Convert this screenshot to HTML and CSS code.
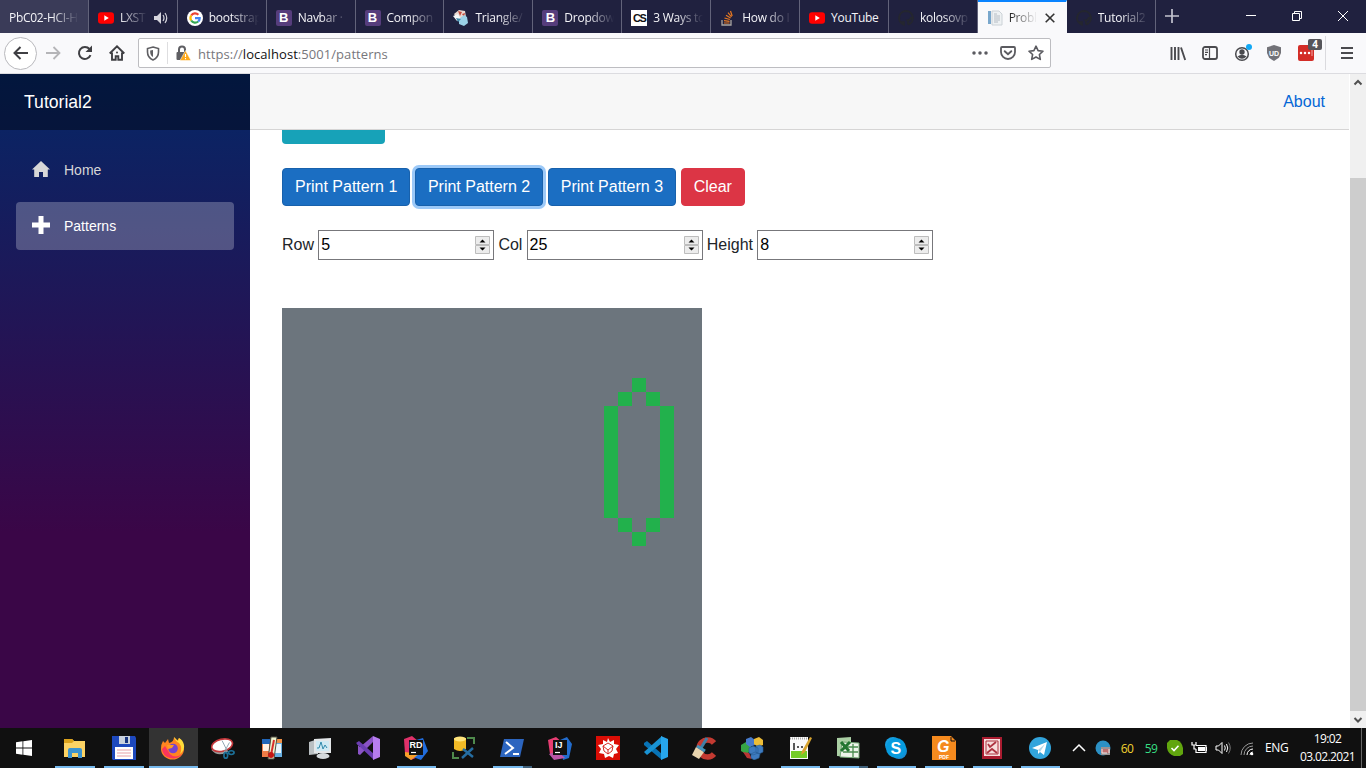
FILE: index.html
```html
<!DOCTYPE html>
<html lang="en">
<head>
<meta charset="utf-8">
<title>Tutorial2</title>
<link rel="stylesheet" href="styles.css">
</head>
<body>
<svg class="defs" width="0" height="0">
  <symbol id="yt" viewBox="0 0 16 16"><rect x="0" y="2.2" width="16" height="11.6" rx="3" fill="#f00"/><path d="M6.3 5.3v5.4L10.8 8z" fill="#fff"/></symbol>
  <symbol id="gh" viewBox="0 0 16 16"><path d="M8 1a7 7 0 0 0-2.2 13.600v-2.400c-2 .4-2.600-.8-2.600-.8M10.200 14.600v-2.600c0-.8-.2-1.200-.5-1.500 2-.2 3.300-1 3.300-3.500M8 1a7 7 0 0 1 2.200 13.600" fill="none" stroke="#24262f" stroke-width="2"/></symbol>
</svg>
<div class="tabs">
  <div class="tab selected-first"><span class="label">PbC02-HCI-H</span></div>
  <div class="tab"><svg class="fav"><use href="#yt"/></svg><span class="label short">LXST</span><svg class="sound" viewBox="0 0 14 14"><path d="M0 5h3l4-4v12L3 9H0z" fill="#d5d5dd"/><path d="M9 4q2 3 0 6M11 2q3.500 5 0 10" fill="none" stroke="#d5d5dd" stroke-width="1.200"/></svg></div>
  <div class="tab"><svg class="fav" viewBox="0 0 16 16"><circle cx="8" cy="8" r="8" fill="#fff"/><g fill="none" stroke-width="2.200"><path d="M4.200 5.500A4.700 4.700 0 0 1 11.400 4.700" stroke="#ea4335"/><path d="M4.200 5.500a4.700 4.700 0 0 0 0 5" stroke="#fbbc05"/><path d="M4.200 10.500a4.700 4.700 0 0 0 7 1" stroke="#34a853"/><path d="M8 8.200h4.700q0 2-1.500 3.300" stroke="#4285f4"/></g></svg><span class="label">bootstrap</span></div>
  <div class="tab"><span class="fav boot">B</span><span class="label">Navbar ·</span></div>
  <div class="tab"><span class="fav boot">B</span><span class="label">Compon</span></div>
  <div class="tab"><svg class="fav" viewBox="0 0 16 16"><path d="M1 4l5-4 6 1 1 6-6 3-4-3z" fill="#e8d9d2"/><path d="M5 1l4 1-2 4zM9 4l3-1-1 4z" fill="#c44b3d"/><path d="M0 6l5-2 3 5-4 2z" fill="#f6f7f9"/><path d="M6 9l5-4 3 2 1 6-4 3-5-2z" fill="#9bd2e8"/><path d="M3 8l5 1-3 3z" fill="#3f88a8"/></svg><span class="label">Triangle/</span></div>
  <div class="tab"><span class="fav boot">B</span><span class="label">Dropdow</span></div>
  <div class="tab"><span class="fav cs">CS</span><span class="label">3 Ways to</span></div>
  <div class="tab"><svg class="fav" viewBox="0 0 16 16"><path d="M2 10v5h9v-5" fill="none" stroke="#aaa6a2" stroke-width="1.300"/><path d="M4 13h5.500M4 10.700l5.500.6M4.500 8l5.300 1.500M6 5.200l4.600 2.900M8 2.700l3.500 4.100M10.500 1l1.700 5" stroke="#e87922" stroke-width="1.200"/></svg><span class="label">How do I</span></div>
  <div class="tab"><svg class="fav"><use href="#yt"/></svg><span class="label">YouTube</span></div>
  <div class="tab"><svg class="fav"><use href="#gh"/></svg><span class="label">kolosovp</span></div>
  <div class="tab active"><svg class="fav" viewBox="0 0 16 16"><path d="M1 1h3v13H1z" fill="#79a7cc"/><path d="M5 1h7l3 3v11H5z" fill="#eef1f3" stroke="#ccd2d7"/><path d="M7 6h6M7 8h6M7 10h6M7 12h4M7 4h3" stroke="#aeb7c0" stroke-width=".9"/></svg><span class="label tiny">Probl</span><svg class="close" viewBox="0 0 10 10"><path d="M.7.7l8.600 8.600M9.300.7L.7 9.300" stroke="#333" stroke-width="1.600"/></svg></div>
  <div class="tab"><svg class="fav"><use href="#gh"/></svg><span class="label">Tutorial2</span></div>
  <svg class="newtab" viewBox="0 0 14 14"><path d="M7 0v14M0 7h14" stroke="#c4c4d0" stroke-width="1.700"/></svg>
  <div class="winctl">
    <svg viewBox="0 0 10 10"><path d="M0 4.500h10" stroke="#fff"/></svg>
    <svg viewBox="0 0 10 10"><path d="M.5 2.500h7v7h-7zM2.500 2.500v-2h7v7h-2" fill="none" stroke="#fff"/></svg>
    <svg viewBox="0 0 10 10"><path d="M0 0l10 10M10 0L0 10" stroke="#fff"/></svg>
  </div>
</div>
<div class="toolbar">
  <div class="nav">
    <span class="back"><svg width="16" height="16" viewBox="0 0 16 16"><path d="M15 8H1.500M7.500 2L1.500 8l6 6" fill="none" stroke="#3f3f43" stroke-width="2"/></svg></span>
    <span><svg width="16" height="16" viewBox="0 0 16 16"><path d="M1 8h13.500M8.500 2l6 6-6 6" fill="none" stroke="#b5b5b8" stroke-width="1.800"/></svg></span>
    <span><svg width="16" height="16" viewBox="0 0 16 16"><path d="M13.500 10.200A6 6 0 1 1 12.500 4" fill="none" stroke="#3f3f43" stroke-width="2"/><path d="M15 .5V7H8.500z" fill="#3f3f43"/></svg></span>
    <span><svg width="16" height="16" viewBox="0 0 16 16"><path d="M.7 8.500L8 1.300l7.300 7.200M3 7.500v7.300h3.700v-3.600h2.600v3.600H13V7.500" fill="none" stroke="#3f3f43" stroke-width="1.900"/><circle cx="8" cy="7.500" r="1" fill="#3f3f43"/></svg></span>
  </div>
  <div class="url">
    <svg class="shield" width="14" height="15" viewBox="0 0 14 15"><path d="M7 1l5.500 1.500V6c0 4-2 6.500-5.500 8C3.500 12.500 1.500 10 1.500 6V2.500z" fill="none" stroke="#5f5f63" stroke-width="1.600"/><path d="M7 4v7C5.200 10 4.200 8.500 4.200 6V4.600z" fill="#5f5f63"/></svg>
    <i></i>
    <svg width="16" height="16" viewBox="0 0 16 16"><path d="M4 8V4.500a3 3 0 0 1 6 0V8" fill="none" stroke="#5f5f63" stroke-width="2"/><rect x="1.500" y="7" width="9" height="8" rx="1" fill="#5f5f63"/><path d="M10.500 5.500L16 15.500H5z" fill="#ffa91a" stroke="#fff" stroke-width=".5"/><path d="M10.500 9v3M10.500 13v1.200" stroke="#fff" stroke-width="1.100"/></svg>
    <span class="address">https://<b>localhost</b>:5001/patterns</span>
    <div class="urlicons">
      <svg width="16" height="16" viewBox="0 0 16 16"><path d="M2 8h.01M8 8h.01M14 8h.01" stroke="#5b5b60" stroke-width="3.500" stroke-linecap="round"/></svg>
      <svg width="16" height="16" viewBox="0 0 16 16"><path d="M2 2h12q1 0 1 1v4a7 7 0 0 1-14 0V3q0-1 1-1z" fill="none" stroke="#5b5b60" stroke-width="1.800"/><path d="M4.700 6.200L8 9.300l3.300-3.100" fill="none" stroke="#5b5b60" stroke-width="1.900" stroke-linecap="round"/></svg>
      <svg width="16" height="16" viewBox="0 0 16 16"><path d="M8 1.200l2.100 4.400 4.900.6-3.600 3.300.9 4.900L8 12l-4.300 2.400.9-4.900L1 6.200l4.900-.6z" fill="none" stroke="#5b5b60" stroke-width="1.600" stroke-linejoin="round"/></svg>
    </div>
  </div>
  <div class="ext">
    <span><svg width="16" height="16" viewBox="0 0 16 16"><path d="M1.500 2v13M5 2v13M8.500 2v13M11 2.500L15.200 15" stroke="#4a4a4e" stroke-width="1.900"/></svg></span>
    <span><svg width="16" height="16" viewBox="0 0 16 16"><rect x="1" y="2" width="14" height="12" rx="2" fill="none" stroke="#4a4a4e" stroke-width="1.800"/><path d="M7.500 2v12M3 5h3M3 7.300h3M3 9.600h2" stroke="#4a4a4e" stroke-width="1.200"/></svg></span>
    <span class="account"><svg width="18" height="20" viewBox="0 0 18 20"><circle cx="8" cy="11" r="6.300" fill="none" stroke="#4a4a4e" stroke-width="1.500"/><circle cx="8" cy="9" r="2.700" fill="#4a4a4e"/><path d="M3.500 13.500q4.500-3.500 9 0-4.500 4.500-9 0" fill="#4a4a4e"/><circle cx="15" cy="4" r="3" fill="#12a8f4"/></svg></span>
    <span class="ub">UD</span>
    <span class="lp"><svg width="16" height="16" viewBox="0 0 16 16"><rect width="16" height="16" rx="2" fill="#d32d27"/><path d="M3 8h.01M7 8h.01M11 8h.01" stroke="#fff" stroke-width="2.500" stroke-linecap="round"/><path d="M14 5v6" stroke="#f4aaa8"/></svg><em>4</em></span>
    <i></i>
    <span><svg width="12" height="12" viewBox="0 0 12 12"><path d="M0 1h12M0 6h12M0 11h12" stroke="#4a4a4e" stroke-width="1.800"/></svg></span>
  </div>
</div>
<div class="page">
  <aside class="sidebar">
    <div class="brand">Tutorial2</div>
    <a class="link"><svg width="18" height="18" viewBox="0 0 18 18"><path d="M9 1L0 9.500h2.200V17H7v-5h4v5h4.800V9.500H18z" fill="currentColor"/></svg>Home</a>
    <a class="link on"><svg width="18" height="18" viewBox="0 0 18 18"><path d="M6.500 0h5v6.500H18v5h-6.500V18h-5v-6.500H0v-5h6.500z" fill="currentColor"/></svg>Patterns</a>
  </aside>
  <main>
    <div class="top-row"><a>About</a></div>
    <div class="content">
      <div class="info"></div>
      <div class="row buttons"><button>Print Pattern 1</button><button class="focus">Print Pattern 2</button><button>Print Pattern 3</button><button class="danger">Clear</button></div>
      <div class="row fields">
        <span>Row</span><div class="num">5<svg class="spin"><use href="#spin"/></svg></div>
        <span>Col</span><div class="num">25<svg class="spin"><use href="#spin"/></svg></div>
        <span>Height</span><div class="num">8<svg class="spin"><use href="#spin"/></svg></div>
      </div>
      <svg class="board" viewBox="0 0 420 420" shape-rendering="crispEdges"><rect width="420" height="420" fill="#6c757d"/><path transform="scale(14)" d="M25 5h1v1h-1zM24 6h1v1h-1zM26 6h1v1h-1zM23 7h1v8h-1zM27 7h1v8h-1zM24 15h1v1h-1zM26 15h1v1h-1zM25 16h1v1h-1z" fill="#22b14c"/></svg>
    </div>
  </main>
  <div class="scroll">
    <svg viewBox="0 0 16 17"><path d="M4.500 10.500L8 7l3.500 3.500" fill="none" stroke="#505050" stroke-width="2"/></svg>
    <div class="thumb"></div>
    <svg viewBox="0 0 16 17"><path d="M4.500 7L8 10.500 11.500 7" fill="none" stroke="#505050" stroke-width="2"/></svg>
  </div>
</div>
<svg class="defs" width="0" height="0"><symbol id="spin" viewBox="0 0 15 18"><path d="M.5.5h14v8H.5zM.5 9.500h14v8H.5z" fill="#ececec" stroke="#bdbdbd"/><path d="M4.500 6.500l3-3 3 3zM4.500 11.500l3 3 3-3z" fill="#000"/></symbol></svg>
<div class="taskbar">
  <span class="start"><svg width="16" height="16" viewBox="0 0 16 16"><path d="M0 2.300L6.500 1.300v6.200H0zM7.300 1.200L16 0v7.500H7.300zM0 8.400h6.500v6.300L0 13.700zM7.300 8.400H16V16l-8.700-1.200z" fill="#fff"/></svg></span>
  <div class="pinned">
    <span class="run"><svg viewBox="0 0 24 24"><path d="M1 3h8l2 2h11v16H1z" fill="#fcd364"/><path d="M1 3h8l2 2-2 2H1z" fill="#dba21c"/><path d="M5 14q0-2 2-2h10q2 0 2 2v8h-4v-5H9v5H5z" fill="#3d94cf"/></svg></span>
    <span class="run"><svg viewBox="0 0 24 24"><path d="M0 0h23l1 2v22H1l-1-1z" fill="#1d48bd"/><path d="M7 0h11v8H7z" fill="#c8d0dc"/><path d="M13 1h3v6h-3z" fill="#17347e"/><path d="M3 11h18v12H3z" fill="#fff"/><path d="M5 14h14M5 17h14M5 20h14" stroke="#e9a2a8" stroke-width="1.200"/></svg></span>
    <span class="run lit"><svg viewBox="0 0 24 24"><path d="M2 5l2 2 3-4 1 4q5-1 5-6l3 4 2-3q5 5 5 11a11.500 10.500 0 0 1-23 0q0-5 2-8z" fill="#ff8420"/><path d="M1 13a11 10 0 0 0 20 5q-7 5-12 0L4 10z" fill="#f9355c"/><path d="M13 1q1 4 5 6 4 5 1 11 5-4 4-9-1-5-5-7l-1 3z" fill="#ffdc3a"/><circle cx="12" cy="12.500" r="4.800" fill="#7542cf"/><path d="M6 9h7l-2 3-4 1z" fill="#ff9b22"/></svg></span>
  </div>
  <div class="apps">
    <span><svg viewBox="0 0 26 24"><path d="M2 13q6 7 15 1" fill="none" stroke="#999" stroke-width="4"/><ellipse cx="12" cy="9" rx="11.500" ry="6.500" transform="rotate(-14 12 9)" fill="#fff" stroke="#c4373b" stroke-width="1.800"/><path d="M12 4l6 12M20 6l-6 11" stroke="#8ba2af"/><g fill="none" stroke="#1c7098" stroke-width="1.800"><ellipse cx="16" cy="20" rx="2" ry="3"/><ellipse cx="22" cy="17" rx="3" ry="2"/></g></svg></span>
    <span><svg viewBox="0 0 24 24"><path d="M2 3h8v18H2z" fill="#ef7c46"/><path d="M2 3h8v5H2z" fill="#2166b9"/><path d="M3 8h6v7H3z" fill="#fff1e4"/><path d="M14 3h8v18h-8z" fill="#68afe1"/><path d="M14 3h8v4h-8z" fill="#ef9146"/><path d="M15 8h6v9h-6z" fill="#eaf5fa"/><path d="M11 1h6l-3 22H8z" fill="#eef4cf" stroke="#514e42"/><path d="M14 4l-3 15" stroke="#d82d2b" stroke-width="2"/><circle cx="11" cy="19" r="3" fill="#c41613"/></svg></span>
    <span><svg viewBox="0 0 24 24"><path d="M1 6l9-3v15L1 19z" fill="#b9bfc2"/><path d="M6 3l17-1v15H6z" fill="#e3e6e8"/><path d="M8 5h13v10H8z" fill="#cfe9f3"/><path d="M9 12h2l2-6 2 7 2-4 2 3" fill="none" stroke="#318aac"/><ellipse cx="15" cy="20" rx="6.500" ry="3" fill="#d4d9dc"/></svg></span>
    <span><svg viewBox="0 0 24 24"><path d="M2 6v12l2 1 13-13V0L4 11 1 8z" fill="#8a53c5"/><path d="M0 7l3-2 15 13v6z" fill="#6b3eb2"/><path d="M17 0l7 3v18l-7 3z" fill="#b77df0"/></svg></span>
    <span class="run"><svg viewBox="0 0 24 24"><path d="M0 3l8-3 6 5v16l-7 3-6-6z" fill="#df316a"/><path d="M12 4l7-2 5 13-7 9-8-3z" fill="#216ddd"/><path d="M1 16l14 2-8 6-6-4z" fill="#f8a029"/><path d="M5 4h14v15H5z" fill="#111"/><text x="5.500" y="12" font-size="9">RD</text><path d="M7 16.500h5" stroke="#fff" stroke-width="1.200"/></svg></span>
    <span><svg viewBox="0 0 24 24"><path d="M2 2v11q6 4 12 0V2z" fill="#f2ba26"/><ellipse cx="8" cy="3" rx="6" ry="2.500" fill="#ffe47b"/><path d="M15 2h7v6M1 16v6h6" fill="none" stroke="#4f8a4c" stroke-width="2"/><path d="M11 13l10 8M21 12l-11 10" stroke="#256da1" stroke-width="2.500"/></svg></span>
    <span class="run multi"><svg viewBox="0 0 24 24"><path d="M4 3h20l-4 18H0z" fill="#2c65bf"/><path d="M6 6l7 6-8 6M13 18h6" fill="none" stroke="#fff" stroke-width="2"/></svg></span>
    <span><svg viewBox="0 0 24 24"><path d="M0 4l8-3 6 5-3 16-9-4z" fill="#e73d72"/><path d="M12 4l7-3 5 7-3 14-6 2z" fill="#226ccd"/><path d="M1 18l9-3 7 7-11 2z" fill="#bb55a8"/><path d="M5 4h14v15H5z" fill="#111"/><text x="7" y="12" font-size="9">IJ</text><path d="M7 16.500h5" stroke="#fff" stroke-width="1.200"/></svg></span>
    <span><svg viewBox="0 0 24 24"><path d="M0 0h24v24H0z" fill="#da0d05"/><path d="M12 2l2 4 4-2v4l5 1-3 4 2 4-4 1-1 4-4-2-4 2-1-4-5-1 2-4-3-4 5-1V4l4 2z" fill="#fff"/><path d="M7 10l5-3 5 3-1 5-4 3-4-3zM7 10l5 4 5-4M12 14v4" fill="none" stroke="#d52b25"/></svg></span>
    <span><svg viewBox="0 0 24 24"><path d="M0 7l3-2 15 13v6L0 9z" fill="#0873b5"/><path d="M0 16L18 0v7L3 19z" fill="#1993d4"/><path d="M17 0l7 3v18l-7 3z" fill="#27a6ec"/></svg></span>
    <span><svg viewBox="0 0 24 24"><path d="M22 7A8.500 8.500 0 1 0 22 18" fill="none" stroke="#c33a31" stroke-width="5.500"/><path d="M15 2L9 12" stroke="#3f7fa6" stroke-width="3"/><path d="M4 11l8 5-5 7-7-4z" fill="#e8d4ae"/><path d="M5 10l8 5" stroke="#4394bb" stroke-width="3"/></svg></span>
    <span><svg viewBox="0 0 24 24"><path d="M1 9l5-3 5 3v6l-5 3-5-3z" fill="#36a545"/><path d="M6 3l5-2 4 3v5l-5 2-4-3z" fill="#477bcc"/><path d="M14 3l5-2 4 3v5l-5 2-4-3z" fill="#edbd37"/><path d="M3 16l6 1 3 6-5-1z" fill="#ba3534"/><path d="M9 12l4-2 5 2v5l-5 2-4-2zM16 10l4-1 3 2v5l-4 2-3-2zM11 18l4-2 5 2-1 4-5 2-3-2z" fill="#3e7bc0" stroke="#255b94" stroke-width=".6"/></svg></span>
    <span class="run"><svg viewBox="0 0 24 24"><path d="M2 1h18v22H2z" fill="#fafafa"/><path d="M3 15h16v7H3z" fill="#75cc27"/><path d="M2 2.500h18" stroke="#aaa" stroke-width="2" stroke-dasharray="1 1"/><path d="M6 7v7M9 11h2M13 11h2" stroke="#222" stroke-width="1.500"/><path d="M22 1l-8 14-1 4 4-3L24 2z" fill="#d8a42f"/></svg></span>
    <span class="run multi"><svg viewBox="0 0 24 24"><path d="M1 2l14-1v20L1 20z" fill="#aacfa4"/><path d="M6 6l17 1v15L4 21z" fill="#eef4ea" stroke="#73a573"/><path d="M7 11h15M7 16h15M17 8v13" stroke="#4a8b4e" stroke-width="1.300"/><path d="M5 6l8 9M14 6l-9 9" stroke="#237631" stroke-width="3"/></svg></span>
    <span class="run"><svg viewBox="0 0 24 24"><circle cx="9" cy="9" r="8" fill="#179fe2"/><circle cx="15" cy="15" r="8" fill="#168fd5"/><circle cx="12" cy="12" r="10" fill="#079bdf"/><text x="6.500" y="17.500" font-size="16">S</text></svg></span>
    <span class="run"><svg viewBox="0 0 24 24"><path d="M0 0h19l5 5v19H0z" fill="#f58a1e"/><path d="M19 1v4h4" fill="none" stroke="#111"/><text x="5" y="16" font-size="16" font-style="italic">G</text><text x="7" y="22.500" font-size="5">PDF</text></svg></span>
    <span class="run"><svg viewBox="0 0 24 24"><path d="M2 1h20v22H2z" fill="#aa1c30"/><path d="M4 3h16v17H4z" fill="#f7dddd"/><path d="M6 5h12v13H6z" fill="none" stroke="#ad3240"/><path d="M8 8l2 3 6-5M7 17l5-4 5 4" fill="none" stroke="#ad3240" stroke-width="1.800"/></svg></span>
    <span class="run"><svg viewBox="0 0 24 24"><circle cx="12" cy="12" r="11" fill="#32a4dc"/><path d="M4 12l15-6-3 13-4-3-2 2v-4z" fill="#fff"/><path d="M10 14l7-6-5 8" fill="#b5d7e9"/></svg></span>
  </div>
  <div class="tray">
    <svg class="t" viewBox="0 0 16 16"><path d="M2 11l6-6 6 6" fill="none" stroke="#fff" stroke-width="1.500"/></svg>
    <svg class="t" viewBox="0 0 16 16"><circle cx="8" cy="8" r="7.500" fill="#2c91c5"/><path d="M6 7h9v8H6z" fill="#9a9394"/><path d="M6 9h8v4H6z" fill="#bf7070"/><path d="M7 9v4h5M14 9v4" fill="none" stroke="#e9e9e9"/></svg>
    <span class="temp yellow">60</span><span class="temp green">59</span>
    <svg class="t" viewBox="0 0 16 16"><path d="M3 0h7q5 2 6 8v6l-3 2H7Q1 14 0 8V3z" fill="#61a60e"/><path d="M4.500 8l2.500 2.500 4.500-4.700" fill="none" stroke="#fff" stroke-width="1.600"/></svg>
    <svg class="t" viewBox="0 0 16 16"><path d="M5 5.500h10v7H5V9M15.500 7v4M1 2v3h4V2M3 5v4h2" fill="none" stroke="#fff" stroke-width="1.200"/><path d="M7 7h7v4H7z" fill="#fff"/></svg>
    <svg class="t" viewBox="0 0 16 16"><path d="M1 6h2.500L7 2.500v11L3.500 10H1zM9.500 5.500q1.500 2.500 0 5M11.500 4q2.500 4 0 8" fill="none" stroke="#fff"/><path d="M13.500 2.500q3.500 5.500 0 11" fill="none" stroke="#777"/></svg>
    <svg class="t wifi" viewBox="0 0 16 16"><path d="M2 15A12 12 0 0 1 14 3M5 15a9 9 0 0 1 9-9" fill="none" stroke="#999"/><path d="M8 15a6 6 0 0 1 6-6M11 15q0-3 3-3" fill="none" stroke="#fff"/><circle cx="13" cy="14" r="1.300" fill="#fff"/></svg>
  </div>
  <span class="lang">ENG</span>
  <div class="clock"><span>19:02</span><span>03.02.2021</span></div>
</div>
</body>
</html>
```
FILE: styles.css
```css
* { box-sizing: border-box; }
body { margin: 0; width: 1366px; height: 768px; overflow: hidden; display: flex; flex-direction: column; background: #fff; font-family: "Open Sans", "Noto Sans", sans-serif; }
svg { display: block; flex: none; }
.defs { position: absolute; }
.tabs { height: 33px; background: #20213f; display: flex; color: #f4f4f8; flex: none; }
.tab { width: 88.9px; padding: 2px 6px 0 9px; border-right: 1px solid #62637a; display: flex; align-items: center; font-size: 12px; letter-spacing: -.25px; white-space: nowrap; flex: none; }
.selected-first { background: #3a3b58; padding-right: 8px; }
.selected-first .label { letter-spacing: -.3px; }
.fav { width: 16px; height: 16px; margin-right: 6px; flex: none; }
.label { flex: 1; min-width: 0; line-height: 18px; -webkit-mask-image: linear-gradient(90deg, #000 calc(100% - 28px), transparent 98%); mask-image: linear-gradient(90deg, #000 calc(100% - 28px), transparent 98%); }
.label.short { flex: none; width: 28px; margin-right: 6px; }
.label.tiny { flex: none; width: 29px; margin-right: 6px; letter-spacing: -.4px; }
.tab:nth-child(10) .label { -webkit-mask-image: none; mask-image: none; }
.sound { width: 14px; height: 14px; }
.boot { background: #563d7c; border-radius: 2px; color: #fff; font: bold 13px/16px "Liberation Sans", sans-serif; text-align: center; letter-spacing: 0; }
.cs { background: #fff; color: #111; font: bold 11px/16px "Liberation Sans", sans-serif; text-align: center; letter-spacing: -1.5px; }
.tab.active { background: #f9f9fb; color: #222; border-top: 2px solid #0a84ff; padding-top: 0; border-right-color: #f9f9fb; }
.close { width: 10px; height: 10px; margin-left: 1px; }
.newtab { width: 14px; height: 14px; margin: 9px 0 0 9px; }
.winctl { margin: 11px 18px 0 auto; display: flex; gap: 36px; }
.winctl svg { width: 10px; height: 10px; }
.toolbar { height: 41px; background: #f9f9fb; border-bottom: 1px solid #dcdce0; display: flex; align-items: center; padding-left: 4px; flex: none; }
.nav, .ext { display: flex; align-items: center; }
.nav span, .ext span { width: 32px; height: 34px; display: flex; align-items: center; justify-content: center; flex: none; }
.nav .back { width: 33px; height: 33px; border: 1px solid #b9b9bd; border-radius: 50%; background: #fff; }
.url { width: 913px; height: 30px; margin-left: 5px; border: 1px solid #bdbdc1; border-radius: 2px; background: #fff; display: flex; align-items: center; padding: 0 6px 0 7px; }
.url i { width: 1px; height: 22px; background: #dedee0; margin: 0 7px; }
.address { margin: 1px 0 0 7px; font-size: 13px; color: #77777c; letter-spacing: .06px; line-height: 20px; }
.address b { font-weight: 400; color: #111; }
.urlicons { margin-left: auto; display: flex; gap: 12px; }
.ext { margin-left: 111px; }
.ext i { width: 1px; height: 34px; background: #dadade; margin: 0 5px 0 3px; }
.ext .account { padding-left: 2px; height: 36px; }
.ext .ub { width: 14px; height: 16px; margin: 0 9px; background: #727278; clip-path: polygon(50% 0, 100% 14%, 100% 50%, 85% 80%, 50% 100%, 15% 80%, 0 50%, 0 14%); color: #fff; font: bold 7px "Liberation Sans", sans-serif; }
.ext .lp { position: relative; }
.lp em { position: absolute; left: 18px; top: 3px; width: 14px; height: 11px; background: #55555a; border-radius: 2px; color: #fff; font: bold 10px/11px "Open Sans", sans-serif; text-align: center; }
.page { flex: 1; min-height: 0; display: flex; font-family: "Liberation Sans", Arial, sans-serif; font-size: 16px; line-height: 24px; color: #212529; }
.sidebar { width: 250px; background: linear-gradient(180deg, #052767 0%, #3a0647 70%); }
.brand { height: 56px; background: rgba(0,0,0,.4); color: #fff; font-size: 17.600px; line-height: 56px; padding-left: 24px; margin-bottom: 16px; }
.link { display: flex; align-items: center; gap: 14px; height: 48px; margin: 0 16px 8px; padding: 0 16px; color: #d7d7d7; font-size: 14px; border-radius: 4px; }
.link svg { margin-top: -3px; }
.link.on { background: rgba(255,255,255,.25); color: #fff; }
main { flex: 1; background: #fff; overflow: hidden; }
.top-row { height: 56px; background: #f7f7f7; border-bottom: 1px solid #d6d5d5; display: flex; align-items: center; justify-content: flex-end; padding-right: 24px; }
.top-row a { color: #0366d6; }
.content { padding-left: 32px; }
.info { width: 103px; height: 14px; background: #17a2b8; border-radius: 0 0 4px 4px; margin-bottom: 24px; }
.row { display: flex; gap: 4.600px; }
button { font: 16px/24px "Liberation Sans", Arial, sans-serif; color: #fff; background: #1b6ec2; border: 1px solid #1861ac; border-radius: 4px; padding: 6px 12px; height: 38px; }
button.focus { box-shadow: 0 0 0 3px #9cc9f8; }
button.danger { background: #dc3545; border-color: #dc3545; }
.fields { margin: 24px 0 48px; line-height: 29px; gap: 4.200px; }
.num { width: 176px; height: 30px; border: 1px solid #77777b; display: flex; align-items: center; justify-content: space-between; padding: 0 3px 0 2px; line-height: 28px; color: #000; background: #fff; }
.spin { width: 15px; height: 18px; margin-top: -1px; }
.board { width: 420px; height: 420px; }
.scroll { width: 17px; background: #f0f0f0; border-left: 1px solid #fff; display: flex; flex-direction: column; }
.scroll svg { width: 16px; height: 17px; }
.thumb { flex: 1; margin-top: 87px; background: #cdcdcd; }
.taskbar { height: 40px; background: #101010; display: flex; color: #fff; flex: none; }
.taskbar text { fill: #fff; font-family: "Liberation Sans", sans-serif; font-weight: bold; }
.start { width: 51px; padding: 12px 0 0 16px; }
.pinned, .apps { display: flex; }
.pinned span, .apps span { height: 40px; display: flex; justify-content: center; padding-top: 8px; flex: none; background-repeat: no-repeat; }
.pinned span { width: 49px; margin-left: -.3px; margin-right: .3px; }
.apps span { width: 48px; }
.apps span:nth-child(-n+2) { width: 49px; }
.pinned svg, .apps svg { width: 24px; height: 24px; }
.run { background-image: linear-gradient(#76b9ed, #76b9ed); background-size: 40px 2px; background-position: 4px 100%; }
.apps .run { background-size: 39px 2px; background-position: 5px 100%; }
.run.lit { background-color: #333; background-size: 100% 2px; background-position: 0 100%; }
.run.multi { background-image: linear-gradient(90deg, #76b9ed 30px, #40617b 30px); }
.tray { display: flex; align-items: center; gap: 8px; margin-left: 7px; }
.t { width: 16px; height: 16px; }
.temp { width: 16px; text-align: center; font-size: 12px; letter-spacing: -.6px; }
.yellow { color: #f2d331; }
.green { color: #37df84; }
.wifi { margin-left: 0; }
.lang { margin-left: 10px; font-size: 12px; line-height: 39px; letter-spacing: -.3px; }
.clock { margin-left: auto; width: 68px; border-right: 1px solid #666; margin-right: 4px; padding: 2px 0 0 0; display: flex; flex-direction: column; align-items: center; font-size: 12px; line-height: 18px; letter-spacing: -.6px; white-space: nowrap; }
```
